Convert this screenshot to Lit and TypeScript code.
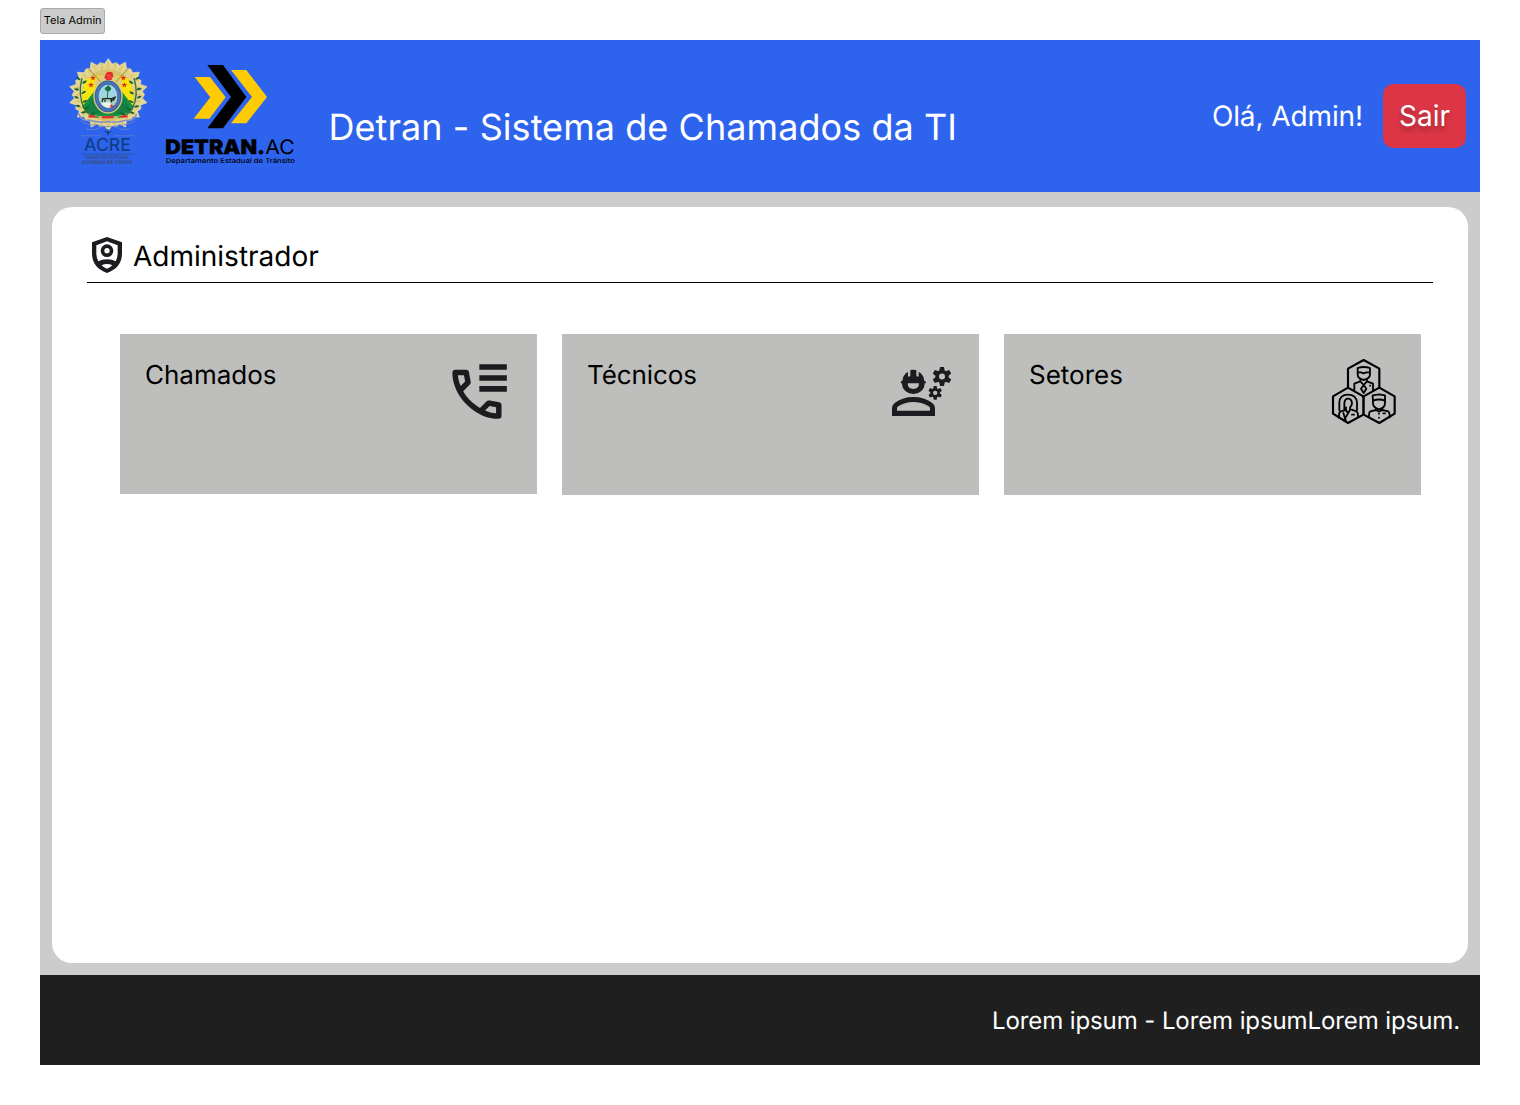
import { LitElement, html, css, svg } from "lit";
import { customElement } from "lit/decorators.js";

const TAU = Math.PI * 2;

/** Closed outline alternating between two radii, used for rays. */
function starPoints(cx: number, cy: number, outer: number, inner: number, n: number, turn = -Math.PI / 2) {
  return Array.from({ length: n * 2 }, (_, i) => {
    const r = i % 2 ? inner : outer;
    const a = turn + (i * TAU) / (n * 2);
    return `${(cx + r * Math.cos(a)).toFixed(1)},${(cy + r * Math.sin(a)).toFixed(1)}`;
  }).join(" ");
}

/** Sunburst whose rays grow long and short in turn. */
function burstPoints(cx: number, cy: number, rx: number, ry: number, n: number) {
  return Array.from({ length: n * 4 }, (_, i) => {
    const k = [1, 0.86, 0.91, 0.86][i % 4];
    const a = -Math.PI / 2 + (i * TAU) / (n * 4);
    return `${(cx + rx * k * Math.cos(a)).toFixed(1)},${(cy + ry * k * Math.sin(a)).toFixed(1)}`;
  }).join(" ");
}

function gear(cx: number, cy: number, r: number, tooth: number, hole: number) {
  return svg`<g transform="translate(${cx} ${cy})">
    <path fill-rule="evenodd" d="M${-r} 0a${r} ${r} 0 1 0 ${2 * r} 0a${r} ${r} 0 1 0 ${-2 * r} 0ZM${-hole} 0a${hole} ${hole} 0 1 1 ${2 * hole} 0a${hole} ${hole} 0 1 1 ${-2 * hole} 0Z"/>
    ${[0, 60, 120, 180, 240, 300].map(
      (a) => svg`<path transform="rotate(${a})" d="M${-tooth} ${-r + 3}L${-tooth * 0.75} ${-r * 1.42}H${tooth * 0.75}L${tooth} ${-r + 3}Z"/>`
    )}
  </g>`;
}

const leaf = (x: number, y: number, a: number) =>
  svg`<path transform="translate(${x} ${y}) rotate(${a})" d="M0 0Q7 -8 17 0Q7 6 0 0Z"/>`;

const acreCrest = html`<svg viewBox="0 0 300 360" width="100" height="120" aria-label="Acre">
  <polygon points=${burstPoints(145, 134, 119, 108, 14)} fill="#e5d58c" stroke="#f0e6b0" stroke-width="2" />
  <polygon points=${starPoints(145, 134, 98, 58, 28)} fill="none" stroke="#c4b164" stroke-width="1.4" />
  <circle cx="144" cy="136" r="78" fill="#d6c36c" />
  <path d="M70 182Q60 118 81 86Q113 70 144 86Q178 70 208 88Q226 120 217 182L144 200Z" fill="#f7e40a" />
  <path d="M66 170Q76 190 118 199H171Q208 192 221 170L185 124H103Z" fill="#159447" />
  <path d="M76 187Q84 151 105 134L126 194ZM212 187Q204 151 183 134L162 194Z" fill="#168044" />
  <path d="M101 104Q108 80 132 74H158Q182 80 188 104Z" fill="#ddcc7c" />
  <g stroke="#9d8a48" stroke-width="3" fill="none">
    <path d="M86 55L124 98M204 55L166 98" />
  </g>
  <g fill="#1c5f35">
    ${[
      [62, 89, 205], [67, 101, -35], [58, 119, 190], [64, 132, -30], [57, 145, 205], [67, 158, -25],
      [62, 169, 190], [72, 179, -30], [79, 185, 170], [91, 194, -20], [225, 89, -25], [220, 101, 215],
      [229, 119, -10], [222, 132, 210], [230, 145, -25], [221, 158, 205], [222, 171, -10], [213, 180, 210],
      [208, 187, 10], [196, 194, 200],
    ].map(([x, y, a]) => leaf(x, y, a))}
  </g>
  <g fill="none" stroke="#2b713d" stroke-width="4">
    <path d="M66 84Q52 136 74 178Q86 198 116 202M222 84Q238 136 216 178Q204 198 174 202" />
  </g>
  <path d="M88 199L103 200M128 202L158 201M186 200L200 199" fill="none" stroke="#e0302c" stroke-width="7" stroke-linecap="round" />
  <ellipse cx="144" cy="139" rx="44" ry="52" fill="#d9ca78" />
  <ellipse cx="144" cy="139" rx="39" ry="47" fill="#416db5" stroke="#2e4f88" stroke-width="2" />
  <ellipse cx="144" cy="139" rx="34" ry="42" fill="none" stroke="#8fabd0" stroke-width="2" stroke-dasharray="2 4" />
  <ellipse cx="144" cy="139" rx="28" ry="35" fill="#a1d5e4" />
  <path d="M116 144Q142 137 172 145Q169 169 145 174Q120 166 116 144Z" fill="#a9d1ba" />
  <path d="M123 160L147 155L158 168L145 173Q129 170 123 160Z" fill="#e9f2e4" />
  <path d="M142 144L144 115M136 119Q134 112 141 112Q145 102 149 112Q155 113 150 121Q145 125 139 121Z" fill="#17723c" stroke="#17723c" stroke-width="3" />
  <path d="M127 146H155L165 142L161 150H153L155 157M129 146L126 155M136 149L134 155" fill="none" stroke="#19282c" stroke-width="4" />
  <g fill="#e52b25">
    <polygon points=${starPoints(155, 168, 7, 3, 5)} />
    <polygon points=${starPoints(99, 84, 9, 4, 5)} />
    <polygon points=${starPoints(190, 84, 9, 4, 5)} />
    <polygon points=${starPoints(93, 105, 9, 4, 5)} />
    <polygon points=${starPoints(193, 105, 9, 4, 5)} />
    <path d="M137 72L143 65L157 67L160 78L154 90H140L133 83Z" />
  </g>
  <path d="M140 75L153 78M143 84L155 83" stroke="#ff7b66" stroke-width="2" />
  <g fill="none" stroke-linecap="round">
    <path d="M57 192Q64 214 92 211Q118 219 144 215Q173 219 195 211Q224 213 229 192" stroke="#8292c4" stroke-width="5" stroke-dasharray="2 4" />
    <path d="M60 211Q80 228 110 224Q143 235 178 225Q211 226 227 209" stroke="#7185bc" stroke-width="3" stroke-dasharray="5 4" />
    <path d="M82 238Q107 242 118 231M173 233Q188 243 206 235" stroke="#7c8bb8" stroke-width="3" stroke-dasharray="4 4" />
    <path d="M136 244Q144 253 152 244M144 239V254" stroke="#153e88" stroke-width="4" />
  </g>
  <text x="72" y="304" font-size="54" font-weight="500" textLength="141" lengthAdjust="spacingAndGlyphs" fill="#103f87">ACRE</text>
  <path d="M62 257H126M162 257H225" stroke="#7387bf" stroke-width="1.5" />
  <path d="M65 312H223" stroke="#25529b" stroke-width="2.5" />
  <g fill="#3a486a" font-size="14" font-weight="600">
    <text x="75" y="328" textLength="130" lengthAdjust="spacingAndGlyphs">VISÃO DE FUTURO</text>
    <text x="65" y="342" textLength="150" lengthAdjust="spacingAndGlyphs">GOVERNO DE TODOS</text>
  </g>
</svg>`;

const detranLogo = html`<svg viewBox="0 0 450 360" width="150" height="120" aria-label="Detran Acre">
  <g fill="#ffcb05">
    <path d="M119 66H165L212 127L163 191H116L166 127Z" />
    <path d="M228 45H274L336 126L274 205H228L291 126Z" />
  </g>
  <path d="M157 30H204L274 126L204 220H157L228 126Z" />
  <text x="31" y="296" font-size="60" font-weight="900" textLength="299" lengthAdjust="spacingAndGlyphs" stroke="#000" stroke-width="1">DETRAN.</text>
  <text x="331" y="296" font-size="60" font-weight="400" textLength="88" lengthAdjust="spacingAndGlyphs">AC</text>
  <text x="32" y="323" font-size="20" font-weight="500" textLength="388" lengthAdjust="spacingAndGlyphs">Departamento Estadual de Trânsito</text>
</svg>`;

const shieldIcon = html`<svg viewBox="33 33 96 114" width="32" height="38">
  <path fill="#1c1b1f" fill-rule="evenodd" d="M81 36L126 52V85Q126 128 81 144Q36 128 36 85V52ZM81 49L49 61V85Q49 98 55 109Q66 103 81 103Q96 103 107 109Q113 98 113 85V61ZM81 117Q72 117 65 121Q71 128 81 131Q91 128 97 121Q90 117 81 117ZM81 58A19 19 0 1 1 81 96A19 19 0 1 1 81 58ZM81 69A8 8 0 1 0 81 85A8 8 0 1 0 81 69Z" />
</svg>`;

const callsIcon = html`<svg viewBox="0 0 240 240" width="80" height="80" fill="#1c1b1f">
  <path transform="translate(12.4 34.4) scale(8.2)" d="M19.95 21q-3.125 0-6.175-1.362T8.225 15.775 4.363 10.225 3 4.05q0-.45.3-.75t.75-.3H8.1q.35 0 .625.238t.325.562l.65 3.5q.05.4-.025.675T9.4 8.45L6.975 10.9q.5.925 1.187 1.787t1.513 1.663q.775.775 1.625 1.438T13.1 17l2.35-2.35q.225-.225.588-.337t.712-.063l3.45.7q.35.1.575.363T21 15.9v4.05q0 .45-.3.75t-.75.3M6.025 9l1.65-1.65L7.25 5H5.025q.125 1.025.35 2.025T6.025 9m8.95 8.95q.975.425 1.988.675T19 18.95v-2.2l-2.35-.475z" />
  <path d="M118 42.500H200.500V59.500H118ZM118 75.500H200.500V92H118ZM118 108H200.500V125H118Z" />
</svg>`;

const techniciansIcon = html`<svg viewBox="0 0 240 240" width="80" height="80" fill="#1c1b1f">
  <path fill-rule="evenodd" d="M36 198V174Q36 164 45 158Q68 141 100 141Q133 141 156 158Q165 164 165 174V198ZM51 182H150V175Q150 171 145 168Q124 156 100 156Q77 156 56 168Q51 171 51 175Z" />
  <path fill-rule="evenodd" d="M66 100Q62 100 62 96.500Q62 93 67 93Q68 75 84 65V78Q84 80 86.500 80Q91 80 91 76V60Q97 58 109 60V76Q109 80 113.500 80Q116 80 116 78V65Q132 75 133 93Q138 93 138 96.500Q138 100 134 100Q134 114 124 123Q114 132 100 132Q86 132 76 123Q66 114 66 100ZM83 100Q83 117 100 117Q117 117 117 100Z" />
  ${gear(186, 79.5, 20, 8, 9)}
  ${gear(165.5, 128.5, 14.5, 6, 6.5)}
</svg>`;

const sectorsIcon = html`<svg viewBox="0 0 255 255" width="85" height="85" fill="none" stroke="#000" stroke-width="6.500" stroke-linecap="round" stroke-linejoin="round">
  <path d="M84 111V56L131 30L178 56V111" />
  <path d="M84 113L39 139V191L84 219L130 194V139ZM178 113L224 139V191L178 219L131 194V139Z" />
  <g stroke-width="5.500">
    <path d="M113 73V54Q131 48 150 54V73Q150 86 131 90Q113 86 113 73ZM113 67H123L131 70L139 67H150" />
    <path d="M121 88V94L103 101V121M141 88V94L159 101V121M121 94L131 105L141 94M131 105L123 116L131 129L139 116Z" />
    <path d="M150 107H150.500" />
    <path d="M58 181V158Q59 134 84 134Q109 134 111 158V180M73 181V160Q74 146 84 146Q95 146 96 160Q95 168 90 173V180M78 172V180L62 184Q57 186 57 197V203M90 180L84 190L78 180M95 179L109 184Q114 187 114 196V201M84 190L72 211M70 189L78 214" />
    <path d="M96 194H102" />
    <path d="M158 136L178 133L195 136V160Q195 174 177 178Q159 173 159 160ZM159 152Q177 145 195 152M168 174V180L151 184Q147 187 147 195V202M187 174V180L205 184Q209 188 209 196V202M168 180L177 185L187 180M177 191V191.500M177 203V203.500M190 190H195" />
  </g>
</svg>`;

@customElement("app-root")
export class AppRoot extends LitElement {
  static styles = css`
    :host {
      display: block;
      box-sizing: border-box;
      width: 1520px;
      height: 1105px;
      padding: 8px 40px 40px;
      background: #fff;
      color: #000;
      font-family: Inter, "Liberation Sans", sans-serif;
      text-rendering: geometricPrecision;
      overflow: hidden;
    }
    svg { display: block; flex: none; }
    .tag {
      box-sizing: border-box;
      width: 65.4px;
      height: 26px;
      margin-bottom: 6px;
      border: 1px solid #a9a9a9;
      border-radius: 3px;
      background: #ccc;
      font-size: 11px;
      line-height: 23px;
      text-align: center;
      white-space: nowrap;
    }
    .header {
      box-sizing: border-box;
      display: flex;
      height: 152px;
      padding: 10px 14px 0 20px;
      background: #2e63ee;
      color: #fff;
      white-space: nowrap;
    }
    .crest { width: 95px; }
    .detran { padding-top: 5px; color: #000; }
    .title {
      margin: 53px 0 0 23.5px;
      font-size: 36px;
      font-weight: 400;
      line-height: 48px;
      letter-spacing: 0.06px;
    }
    .account {
      display: flex;
      align-items: center;
      gap: 20px;
      height: 64px;
      margin: 34px 0 0 auto;
      font-size: 28px;
    }
    .hello { letter-spacing: -0.1px; }
    .logout {
      width: 83px;
      height: 64px;
      padding: 0;
      border: 0;
      border-radius: 10px;
      background: #dc3545;
      color: #fff;
      font: inherit;
      text-shadow: 0 4px 4px rgba(0, 0, 0, 0.25);
    }
    .main {
      box-sizing: border-box;
      height: 783px;
      padding: 15px 12px 12px;
      background: #ccc;
    }
    .panel {
      box-sizing: border-box;
      height: 756px;
      padding: 29px 35px 0;
      border-radius: 20px;
      background: #fff;
    }
    .heading {
      box-sizing: border-box;
      display: flex;
      gap: 10px;
      height: 47px;
      padding-left: 4px;
      border-bottom: 1px solid #000;
      font-size: 28px;
      line-height: 40px;
    }
    .heading h2 { margin: 0; font: inherit; }
    .cards {
      display: grid;
      grid-template-columns: repeat(3, 417px);
      align-items: start;
      gap: 25px;
      padding: 51px 0 0 33px;
    }
    .card {
      box-sizing: border-box;
      display: flex;
      justify-content: space-between;
      height: 161px;
      padding: 16px 16px 0 25px;
      background: #bebebc;
      font-size: 26px;
      line-height: 52px;
    }
    .card.calls { height: 160px; padding-right: 17px; }
    .card.technicians { padding-right: 19px; letter-spacing: -0.1px; }
    .footer {
      box-sizing: border-box;
      height: 90px;
      padding: 26px 20px;
      background: #1f1f1f;
      color: #fff;
      font-size: 24px;
      line-height: 40px;
      letter-spacing: -0.1px;
      text-align: right;
    }
  `;

  render() {
    return html`
      <div class="tag">Tela Admin</div>
      <header class="header">
        <div class="crest">${acreCrest}</div>
        <div class="detran">${detranLogo}</div>
        <h1 class="title">Detran - Sistema de Chamados da TI</h1>
        <div class="account">
          <span class="hello">Olá, Admin!</span>
          <button class="logout">Sair</button>
        </div>
      </header>
      <main class="main">
        <section class="panel">
          <div class="heading">${shieldIcon}<h2>Administrador</h2></div>
          <div class="cards">
            <div class="card calls"><span>Chamados</span>${callsIcon}</div>
            <div class="card technicians"><span>Técnicos</span>${techniciansIcon}</div>
            <div class="card"><span>Setores</span>${sectorsIcon}</div>
          </div>
        </section>
      </main>
      <footer class="footer">Lorem ipsum - Lorem ipsumLorem ipsum.</footer>
    `;
  }
}
